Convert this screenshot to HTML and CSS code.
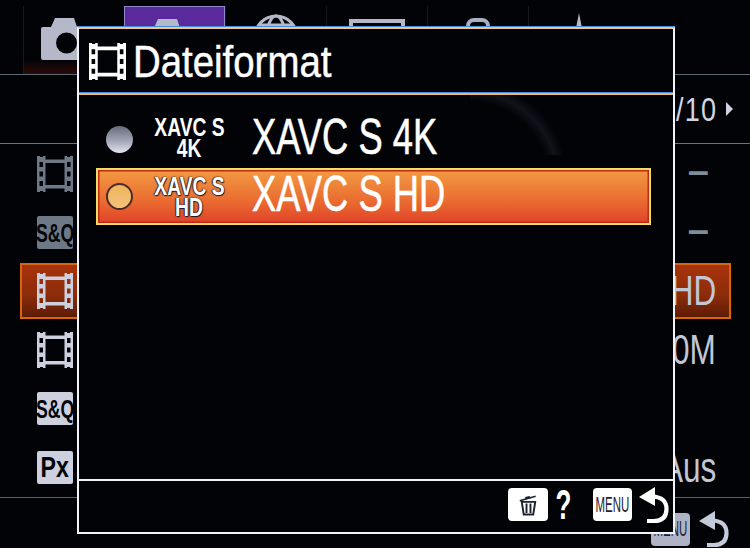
FILE: index.html
```html
<!DOCTYPE html>
<html lang="de">
<head>
<meta charset="utf-8">
<title>Dateiformat</title>
<link rel="stylesheet" href="styles.css">
</head>
<body>
<svg class="defs" width="0" height="0" aria-hidden="true">
  <symbol id="film" viewBox="0 0 36 36">
    <path fill-rule="evenodd" d="M0 0H3V1H6V0H8.500V3.500H27.500V0H30V1H33V0H36V36H33V35H30V36H27.500V32.500H8.500V36H6V35H3V36H0ZM8.500 7V29H27.500V7ZM2.500 6V11H6V6ZM2.500 15.500V20.500H6V15.500ZM2.500 25V30H6V25ZM30 6V11H33.500V6ZM30 15.500V20.500H33.500V15.500ZM30 25V30H33.500V25Z"/>
  </symbol>
  <symbol id="camera" viewBox="0 0 58 46">
    <path fill-rule="evenodd" d="M4 12Q4 10 6 10H14L18 1H37L40 10H55V43H6Q4 43 4 41ZM29.500 15.500A10.500 10.500 0 1 0 29.600 36.500A10.500 10.500 0 1 0 29.500 15.500Z"/>
  </symbol>
  <symbol id="back" viewBox="0 0 32 38">
    <path fill="currentColor" d="M1 11L17 1V20Z"/>
    <path fill="none" stroke="currentColor" stroke-width="4.200" d="M14 10.500Q28.500 11 28.500 23Q28.500 35 16 35H9"/>
  </symbol>
</svg>

<div class="screen">
  <nav class="tabs">
    <div class="tab tab-camera">
      <svg class="tab-icon"><use href="#camera"/></svg>
    </div>
    <div class="tab tab-active">
      <svg class="tab-icon"><use href="#camera"/></svg>
    </div>
    <div class="tab">
      <svg class="tab-globe" width="46" height="46" viewBox="0 0 46 46"><circle cx="23" cy="23" r="21"/><ellipse cx="23" cy="23" rx="9" ry="21"/><path d="M6 11H40M2 23H44"/></svg>
    </div>
    <div class="tab"><span class="tab-box"></span></div>
    <div class="tab"><span class="tab-key"></span></div>
    <div class="tab"><span class="tab-star"></span></div>
  </nav>

  <div class="pagebar">
    <span class="pageno">1/10</span>
    <span class="pagearrow"></span>
  </div>

  <ul class="rows">
    <li class="row"><svg class="ico dim"><use href="#film"/></svg><span class="val dash">–</span></li>
    <li class="row"><span class="chip dimchip"><span class="chip-t">S&amp;Q</span></span><span class="val dash">–</span></li>
    <li class="row row-on"><svg class="ico"><use href="#film"/></svg><span class="val">XAVC S HD</span></li>
    <li class="row"><svg class="ico"><use href="#film"/></svg><span class="val">60M</span></li>
    <li class="row"><span class="chip"><span class="chip-t">S&amp;Q</span></span></li>
    <li class="row"><span class="chip"><span class="chip-t chip-px">Px</span></span><span class="val">Aus</span></li>
  </ul>

  <footer class="foot">
    <span class="menu-chip dimmenu"><span class="menu-t">MENU</span></span>
    <svg class="backicon dimback"><use href="#back"/></svg>
  </footer>

  <section class="dialog">
    <header class="dlg-head">
      <svg class="title-ico"><use href="#film"/></svg>
      <h1 class="dlg-title">Dateiformat</h1>
    </header>
    <div class="dlg-list">
      <div class="opt">
        <span class="radio"></span>
        <span class="badge">XAVC S<br>4K</span>
        <span class="opt-label">XAVC S 4K</span>
      </div>
      <div class="opt opt-on">
        <span class="radio radio-on"></span>
        <span class="badge badge-on">XAVC S<br>HD</span>
        <span class="opt-label">XAVC S HD</span>
      </div>
    </div>
    <div class="dlg-foot">
      <span class="white-btn">
        <svg width="19" height="26" viewBox="0 0 24 26"><path d="M1 7.500L21 2" stroke="#1a2230" stroke-width="2" fill="none"/><path d="M8 4.500L14 3" stroke="#1a2230" stroke-width="3" fill="none"/><path d="M3.500 9H20.500L18 25H6Z" fill="none" stroke="#1a2230" stroke-width="2.400"/><path d="M9.500 11V23M14.500 11V23" stroke="#1a2230" stroke-width="2.400"/></svg>
      </span>
      <span class="question">?</span>
      <span class="menu-chip"><span class="menu-t">MENU</span></span>
      <svg class="backicon"><use href="#back"/></svg>
    </div>
  </section>
</div>
</body>
</html>
```
FILE: styles.css
```css
* { box-sizing: border-box; }
html, body { margin: 0; padding: 0; background: #020307; }
.defs { position: absolute; }
.screen {
  position: relative;
  width: 750px;
  height: 548px;
  overflow: hidden;
  display: flex;
  flex-direction: column;
  background: #020307;
  font-family: "Liberation Sans", sans-serif;
  color: #bcc1d2;
}

/* tab bar */
.tabs {
  display: flex;
  height: 75px;
  padding-left: 23px;
  border-bottom: 1px solid #5f6c78;
}
.tab {
  width: 101px;
  display: flex;
  justify-content: center;
  border-left: 1px solid #12181d;
  margin-top: 6px;
  padding-top: 11px;
}
.tab-camera {
  background: linear-gradient(#020307 78%, #2a0a08);
  justify-content: flex-start;
  padding-left: 13px;
}
.tab-active {
  background: #5a2a9c;
  border: 1px solid #8d86c8;
  border-bottom: 0;
  justify-content: flex-start;
  padding-left: 15px;
}
.tab-icon { width: 58px; height: 46px; fill: #b4b8c8; flex: none; }
.tab-globe { fill: none; stroke: #b4b8c8; stroke-width: 3; margin-top: -3px; }
.tab-box { width: 56px; height: 40px; border: 4px solid #b4b8c8; margin-top: 2px; }
.tab-key { width: 24px; height: 40px; border: 4px solid #a4b0c6; border-radius: 8px; margin-top: 1px; }
.tab-star {
  width: 12px;
  height: 30px;
  background: #b4b8c8;
  clip-path: polygon(50% 0, 100% 100%, 0 100%);
  margin-top: -4px;
}

/* page row */
.pagebar {
  height: 70px;
  padding-right: 17px;
  display: flex;
  justify-content: flex-end;
  align-items: center;
  gap: 9px;
  border-bottom: 1px solid #6a7480;
}
.pageno {
  font-size: 33px;
  line-height: 1;
  letter-spacing: 1.5px;
  color: #d3d6e2;
  transform: scaleX(.82);
  transform-origin: right center;
}
.pagearrow {
  width: 7px;
  height: 14px;
  background: #cfd3e0;
  clip-path: polygon(0 0, 100% 50%, 0 100%);
}

/* setting rows */
.rows {
  list-style: none;
  margin: 0;
  padding: 0 19px 0 20px;
  height: 355px;
  display: grid;
  grid-template-rows: repeat(6, 1fr);
  align-items: center;
  border-bottom: 1px solid #55616d;
}
.row {
  height: 56px;
  padding: 0 15px 0 17px;
  display: flex;
  align-items: center;
  justify-content: space-between;
}
.row-on {
  border: 2px solid #d9640f;
  padding: 0 13px 0 15px;
  background: linear-gradient(#a8330c, #8c2c0a 58%, #5e1c06);
}
.ico { width: 36px; height: 36px; fill: #ccd0df; }
.dim { fill: #6d7986; }
.chip {
  width: 36px;
  height: 33px;
  border-radius: 2px;
  background: #ccd0df;
  color: #05060a;
  display: flex;
  align-items: center;
  justify-content: center;
}
.chip-t {
  flex: none;
  font-weight: 700;
  font-size: 26px;
  line-height: 1;
  transform: scaleX(.68);
}
.chip-px { font-size: 29px; transform: scaleX(.8); }
.dimchip { background: #6d7986; }
.val {
  font-size: 42px;
  line-height: 1;
  color: #c2c6d6;
  white-space: nowrap;
  transform: scaleX(.75);
  transform-origin: right center;
}
.dash {
  font-size: 38px;
  color: #7f8c99;
  margin: 0 7px 6px 0;
  font-weight: 700;
  transform: none;
}

/* menu footer */
.foot {
  flex: 1;
  display: flex;
  justify-content: flex-end;
  align-items: center;
  gap: 8px;
  padding: 12px 20px 0 0;
}

/* dialog */
.dialog {
  position: absolute;
  left: 77px;
  top: 27px;
  width: 598px;
  height: 507px;
  display: flex;
  flex-direction: column;
  background: #020307;
  border: 2px solid #f2f3f8;
  border-top-color: #f3c27f;
  box-shadow: 0 -1px 0 #3f8fdc;
}
.dlg-head {
  height: 66px;
  padding-left: 10px;
  display: flex;
  align-items: center;
  gap: 7px;
  border-bottom: 2px solid #f0b56a;
  box-shadow: inset 0 -1px 0 #3f8fdc;
}
.title-ico { width: 37px; height: 37px; fill: #fff; flex: none; }
.dlg-title {
  margin: 0;
  font-size: 45px;
  font-weight: 400;
  line-height: 1;
  color: #fff;
  -webkit-text-stroke: .5px #fff;
  white-space: nowrap;
  transform: scaleX(.853);
  transform-origin: left center;
}
.dlg-list {
  flex: 1;
  padding: 16px 22px 0 17px;
  display: flex;
  flex-direction: column;
  background: radial-gradient(circle at 0 85px, transparent 78px, #11121a 88px, transparent 98px) 391px 0 / 100px 60px no-repeat;
}
.opt {
  height: 57px;
  display: flex;
  align-items: center;
  padding-left: 10px;
}
.opt-on {
  padding-left: 8px;
  border: 2px solid #f4dc66;
  box-shadow: inset 0 0 0 1.500px #c22a12;
  background: linear-gradient(#f29a42, #ea6a30 60%, #e0432a);
}
.radio {
  width: 27px;
  height: 27px;
  border-radius: 50%;
  flex: none;
  background: linear-gradient(#666a7c, #a2a6b6 55%, #e4e6ee);
}
.radio-on {
  background: linear-gradient(#eeb45c, #f4c27a);
  border: 2px solid #4a2a2a;
}
.badge {
  width: 90px;
  flex: none;
  margin: 0 0 4px 11px;
  text-align: center;
  color: #fff;
  font-weight: 700;
  font-size: 25px;
  line-height: 21px;
  white-space: nowrap;
  transform: scaleX(.77);
}
.badge-on {
  margin-bottom: 0;
  text-shadow: 0 0 2px #1c1a2a, 1px 1px 1px #1c1a2a, -1px 0 1px #1c1a2a;
}
.opt-label {
  margin: 0 0 6px 18px;
  font-size: 50px;
  line-height: 1;
  color: #fff;
  -webkit-text-stroke: .6px #fff;
  white-space: nowrap;
  transform: scaleX(.727);
  transform-origin: left center;
}
.dlg-foot {
  height: 53px;
  border-top: 2px solid #f3f4fa;
  padding: 0 3px 4px 0;
  display: flex;
  justify-content: flex-end;
  align-items: center;
}
.white-btn {
  width: 40px;
  height: 33px;
  border-radius: 4px;
  background: #fff;
  display: flex;
  align-items: center;
  justify-content: center;
}
.question {
  width: 45px;
  padding-left: 1px;
  font-weight: 700;
  font-size: 42px;
  line-height: 1;
  color: #fff;
  transform: scaleX(.62);
  transform-origin: left center;
  margin-left: 7px;
  margin-right: -7px;
}
.menu-chip {
  width: 39px;
  height: 33px;
  border-radius: 4px;
  background: #fff;
  color: #1a2438;
  display: flex;
  align-items: center;
  justify-content: center;
}
.menu-t {
  flex: none;
  font-size: 22px;
  line-height: 1;
  transform: scaleX(.52);
}
.dimmenu { background: #aeb3c6; }
.backicon { width: 32px; height: 38px; color: #fff; margin-left: 6px; flex: none; }
.dimback { color: #c5cada; margin-left: 0; }
```
